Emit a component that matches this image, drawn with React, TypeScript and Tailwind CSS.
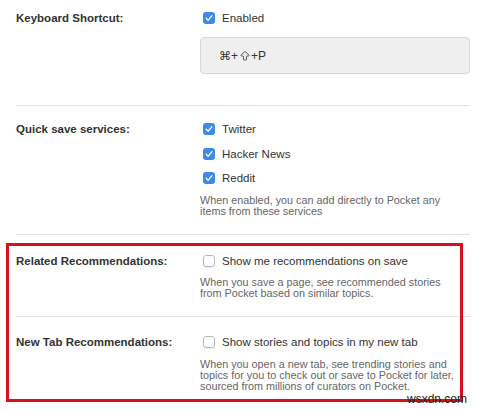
import type { ReactNode } from "react";
import { ArrowBigUp } from "lucide-react";

const font = { fontFamily: '"Liberation Sans", Arial, "DejaVu Sans", sans-serif' };

function Checkbox({ checked }: { checked: boolean }) {
  if (checked) {
    return (
      <span className="ml-[3px] flex h-[12px] w-[12px] shrink-0 items-center justify-center rounded-[3px] bg-[#3b8ce8]">
        <svg viewBox="0 0 12 12" className="h-[10px] w-[10px]">
          <path d="M2.6 6.3 L5 8.6 L9.4 3.4" fill="none" stroke="#fff" strokeWidth="1.7" strokeLinecap="round" strokeLinejoin="round" />
        </svg>
      </span>
    );
  }
  return (
    <span className="ml-[3px] h-[12px] w-[12px] shrink-0 rounded-[3px] border border-[#b9b9b9] bg-white shadow-[0_1px_1px_rgba(0,0,0,0.08)]" />
  );
}

function Option({ checked, children }: { checked: boolean; children: ReactNode }) {
  return (
    <div className="flex h-[14px] items-center">
      <Checkbox checked={checked} />
      <span className="ml-[7px] text-[11.5px] leading-[14px] text-[#333]">{children}</span>
    </div>
  );
}

function Row({ label, pt, pb, last, children }: { label: string; pt: string; pb: string; last?: boolean; children: ReactNode }) {
  return (
    <div className={`grid grid-cols-[184px_1fr] ${pt} ${pb} ${last ? "" : "border-b border-[#e2e2e2]"}`}>
      <div className="text-[11.5px] font-bold leading-[14px] text-[#333]">{label}</div>
      <div>{children}</div>
    </div>
  );
}

function Desc({ children, mt }: { children: ReactNode; mt: string }) {
  return <p className={`${mt} text-[10.8px] leading-[11px] text-[#666]`}>{children}</p>;
}

export default function App() {
  return (
    <div className="relative h-[409px] w-[480px] overflow-hidden bg-white" style={font}>
      <div className="pl-4 pr-[10px]">
        <Row label="Keyboard Shortcut:" pt="pt-[11px]" pb="pb-[31px]">
          <Option checked>Enabled</Option>
          <div className="mt-[12px] flex h-[37px] items-center rounded-[4px] border border-[#d6d6d6] bg-[#efefef] pl-[18px] text-[12px] text-[#333]">
            <span>⌘+</span>
            <ArrowBigUp size={12} strokeWidth={1.6} className="mx-[0.5px] text-[#333]" />
            <span>+P</span>
          </div>
        </Row>

        <Row label="Quick save services:" pt="pt-[16px]" pb="pb-[17px]">
          <div className="flex flex-col gap-[10.5px]">
            <Option checked>Twitter</Option>
            <Option checked>Hacker News</Option>
            <Option checked>Reddit</Option>
          </div>
          <Desc mt="mt-[10px]">
            When enabled, you can add directly to Pocket any
            <br />
            items from these services
          </Desc>
        </Row>

        <Row label="Related Recommendations:" pt="pt-[19px]" pb="pb-[17px]">
          <Option checked={false}>Show me recommendations on save</Option>
          <Desc mt="mt-[9px]">
            When you save a page, see recommended stories
            <br />
            from Pocket based on similar topics.
          </Desc>
        </Row>

        <Row label="New Tab Recommendations:" pt="pt-[18px]" pb="pb-0" last>
          <Option checked={false}>Show stories and topics in my new tab</Option>
          <Desc mt="mt-[10px]">
            When you open a new tab, see trending stories and
            <br />
            topics for you to check out or save to Pocket for later,
            <br />
            sourced from millions of curators on Pocket.
          </Desc>
        </Row>
      </div>

      {/* annotation box drawn over the last two rows */}
      <div className="pointer-events-none absolute left-[6px] top-[243px] h-[159px] w-[457px] border-[3px] border-[#d8101a]" />
      <span className="absolute left-[407px] top-[391px] text-[12px] leading-[16px] text-[#222]">wsxdn.com</span>
    </div>
  );
}
